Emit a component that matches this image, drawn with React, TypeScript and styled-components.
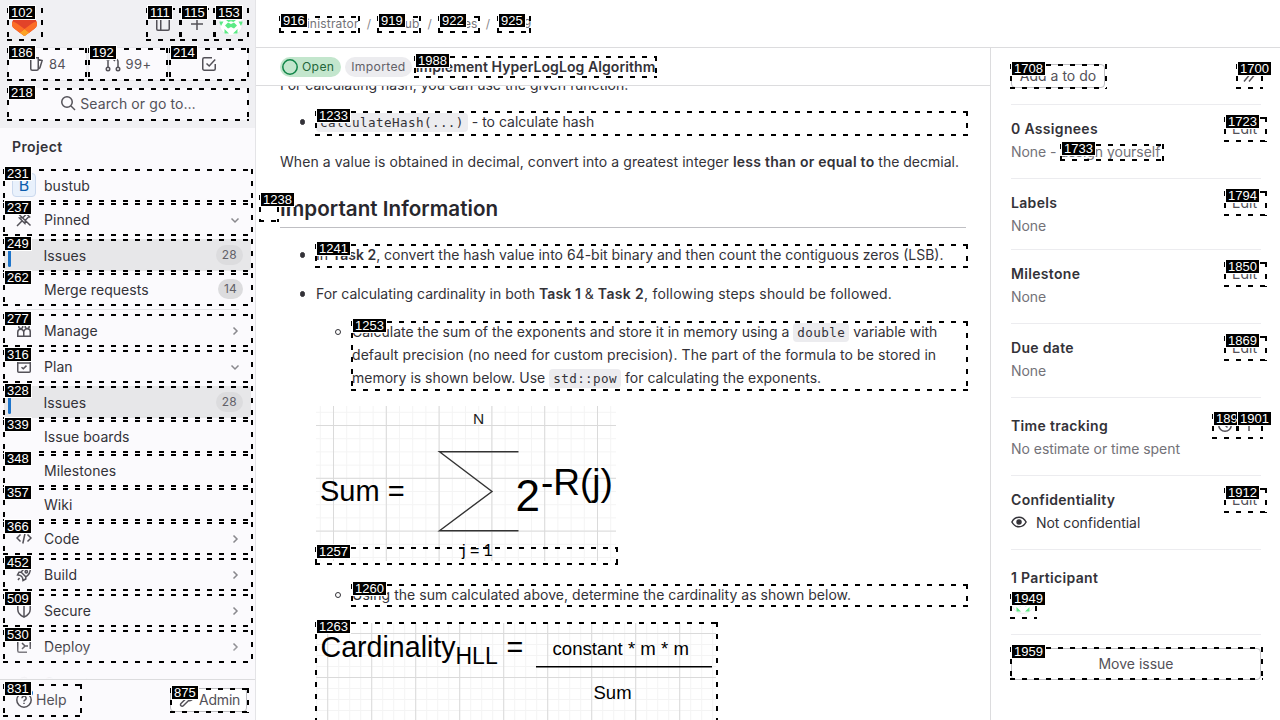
import React from "react";
import styled, { createGlobalStyle } from "styled-components";

const Global = createGlobalStyle`
  *, *::before { box-sizing: border-box; }
  html, body { margin: 0; height: 100%; overflow: hidden; }
  body {
    font-family: Inter, "Noto Sans", "Liberation Sans", sans-serif;
    font-size: 14px;
    color: #333238;
    background: #fff;
  }
  p, ul, h2, h3 { margin: 0; padding: 0; }
  a { color: inherit; text-decoration: none; }
`;

const Page = styled.div`
  position: relative;
  display: flex;
  width: 1280px;
  height: 720px;
  overflow: hidden;
`;

/* ---------- Left sidebar ---------- */

const Sidebar = styled.aside`
  display: flex;
  flex-direction: column;
  width: 256px;
  height: 720px;
  flex: none;
  background: #fbfafd;
  border-right: 1px solid #e4e4e7;
`;

const SidebarTop = styled.header`
  height: 128px;
  flex: none;
  padding: 8px 7px 8px 8px;
  display: flex;
  flex-direction: column;
  gap: 8px;
  background: #f0f0f3;
`;

const BrandRow = styled.div`
  display: flex;
  align-items: center;
  height: 32px;
`;

const Logo = styled.a`
  display: flex;
  padding: 4px;
  margin-right: auto;
`;

const IconButton = styled.button`
  display: flex;
  align-items: center;
  justify-content: center;
  width: 34px;
  height: 32px;
  padding: 0;
  border: 0;
  background: none;
  color: #535158;
`;

const CounterRow = styled.div`
  display: grid;
  grid-template-columns: 78px 78px 78px;
  gap: 3px;
  height: 32px;
`;

const Counter = styled.a`
  display: flex;
  align-items: center;
  justify-content: center;
  gap: 5px;
  border-radius: 4px;
  background: #fbfafd;
  box-shadow: 0 0 0 1px #e9e9ed;
  color: #535158;
  font-size: 13px;
  letter-spacing: 0.4px;
`;

const Search = styled.button`
  display: flex;
  align-items: center;
  justify-content: center;
  gap: 4px;
  height: 32px;
  padding: 0 6px 2px;
  border: 0;
  border-radius: 4px;
  background: #fbfafd;
  color: #535158;
  font: inherit;
  letter-spacing: 0.1px;
`;

const Nav = styled.nav`
  position: relative;
  flex: 1;
  overflow: hidden;
  padding: 9px 4px 0;
`;

const NavFade = styled.div`
  position: absolute;
  left: 0;
  right: 0;
  bottom: 0;
  height: 36px;
  background: linear-gradient(to top, #fbfafd, rgba(251, 250, 253, 0));
`;

const NavHeading = styled.h2`
  height: 33px;
  padding-left: 8px;
  line-height: 20px;
  font-size: 14px;
  font-weight: 600;
  letter-spacing: 0.4px;
`;

const NavRow = styled.a<{ $after?: number; $active?: boolean }>`
  display: flex;
  align-items: center;
  height: 32px;
  margin-bottom: ${(p) => p.$after ?? 2}px;
  padding: 0 8px ${(p) => (p.$active ? 0 : 2)}px;
  border-radius: 4px;
  background: ${(p) => (p.$active ? "#e7e7e9" : "transparent")};
`;

const ActiveBar = styled.span`
  width: 3px;
  height: 24px;
  margin: 0 1px 0 -4px;
  border-radius: 4px;
  background: #1f75cb;
`;

const NavIcon = styled.span<{ $narrow?: boolean }>`
  display: flex;
  justify-content: center;
  width: 24px;
  margin-right: ${(p) => (p.$narrow ? 7.5 : 8)}px;
  color: #535158;
`;

const NavLabel = styled.span`
  flex: 1;
  letter-spacing: 0.05px;
`;

const Count = styled.span`
  padding: 0 6px;
  border-radius: 10px;
  background: #dcdcde;
  color: #626168;
  font-size: 12px;
  line-height: 20px;
  letter-spacing: 0.2px;
`;

const ProjectAvatar = styled.span`
  width: 24px;
  height: 24px;
  margin-right: 8px;
  border: 1px solid #cbd9ee;
  border-radius: 4px;
  background: #e9f1fc;
  color: #0b5cad;
  font-size: 16px;
  line-height: 22px;
  text-align: center;
`;

const Chevron = styled.span`
  display: flex;
  padding-top: 1px;
  color: #89888d;
`;

const Divider = styled.hr`
  height: 1px;
  margin: 3px 12px 5px;
  border: 0;
  background: #e4e4e7;
`;

const SidebarFooter = styled.footer`
  display: flex;
  align-items: center;
  justify-content: space-between;
  height: 41px;
  padding: 0 8px 0 16px;
  border-top: 1px solid #dcdcde;
`;

const HelpButton = styled.a`
  position: relative;
  display: flex;
  align-items: center;
  gap: 4px;
  padding-bottom: 1px;
  color: #535158;
`;

const HelpDot = styled.i`
  position: absolute;
  left: 11px;
  top: -1px;
  width: 6px;
  height: 6px;
  border-radius: 50%;
  background: #1f75cb;
`;

const AdminButton = styled.a`
  display: flex;
  align-items: center;
  gap: 4px;
  width: 77px;
  height: 24px;
  padding: 0 5px 1px 8px;
  border: 1px solid #bfbfc3;
  border-radius: 4px;
  background: #fff;
  color: #535158;
  letter-spacing: -0.2px;
`;

/* ---------- Main column ---------- */

const Main = styled.div`
  display: flex;
  flex-direction: column;
  flex: 1;
  min-width: 0;
`;

const TopBar = styled.header`
  display: flex;
  align-items: center;
  gap: 8px;
  height: 48px;
  padding-left: 24px;
  border-bottom: 1px solid #dcdcde;
  color: #737278;
  font-size: 12px;
  letter-spacing: 0.2px;
`;

const Slash = styled.span`
  color: #89888d;
`;

const Body = styled.div`
  display: flex;
  flex: 1;
  min-height: 0;
`;

const Issue = styled.main`
  width: 734px;
  overflow: hidden;
  display: flex;
  flex-direction: column;
`;

const StickyHeader = styled.div`
  display: flex;
  align-items: center;
  gap: 4px;
  height: 38px;
  flex: none;
  padding-left: 24px;
  border-bottom: 1px solid #dcdcde;
`;

const Badge = styled.span<{ $open?: boolean }>`
  display: flex;
  align-items: center;
  gap: 4px;
  height: 20px;
  padding: ${(p) => (p.$open ? "0 7px 0 2px" : "0 6px")};
  border-radius: 10px;
  background: ${(p) => (p.$open ? "#c3e6cd" : "#ececef")};
  color: ${(p) => (p.$open ? "#24663b" : "#626168")};
  font-size: 12.2px;
  letter-spacing: 0.3px;
`;

const StatusIcon = styled.span`
  display: flex;
  color: #108548;
`;

const StickyTitle = styled.strong`
  font-weight: 600;
  letter-spacing: 0.08px;
`;

const Description = styled.article`
  flex: 1;
  min-height: 0;
  overflow: hidden;
  padding: 0 24px;
  line-height: 23px;
`;

const Paragraph = styled.p<{ $top: number }>`
  height: 23px;
  margin-top: ${(p) => p.$top}px;
  white-space: nowrap;
`;

const Bold = styled.strong<{ $track?: number }>`
  font-weight: 600;
  letter-spacing: ${(p) => p.$track ?? 0}px;
`;

const Tracked = styled.span<{ $track: number }>`
  letter-spacing: ${(p) => p.$track}px;
`;

const Heading = styled.h2`
  height: 35px;
  margin: 20px 0 15px;
  border-bottom: 1px solid #bfbfc3;
  font-size: 20.6px;
  font-weight: 600;
  line-height: 32px;
  letter-spacing: 0.04px;
  color: #28272d;
`;

const List = styled.ul<{ $top?: number }>`
  margin-top: ${(p) => p.$top ?? 0}px;
  padding-left: 36px;
  list-style: none;
`;

const Item = styled.li<{ $hollow?: boolean; $after?: number }>`
  position: relative;
  margin-bottom: ${(p) => p.$after ?? 0}px;
  &::before {
    content: "";
    position: absolute;
    left: ${(p) => (p.$hollow ? -17 : -16.4)}px;
    top: 9px;
    width: ${(p) => (p.$hollow ? 6 : 5.6)}px;
    height: ${(p) => (p.$hollow ? 6 : 5.6)}px;
    border-radius: 50%;
    border: 1px solid #333238;
    background: ${(p) => (p.$hollow ? "transparent" : "#333238")};
  }
`;

const Line = styled.span<{ $track?: number }>`
  display: block;
  height: 23px;
  white-space: nowrap;
  letter-spacing: ${(p) => p.$track ?? 0}px;
`;

const Code = styled.code`
  padding: 2px 4px;
  border-radius: 4px;
  background: #ececef;
  font-family: "DejaVu Sans Mono", "Liberation Mono", monospace;
  font-size: 12.6px;
  line-height: 1;
  letter-spacing: 0.41px;
`;

const Figure = styled.svg<{ $after?: number }>`
  display: block;
  margin-bottom: ${(p) => p.$after ?? 0}px;
  font-family: "Liberation Sans", Arial, sans-serif;
`;

/* ---------- Right panel ---------- */

const Panel = styled.aside`
  flex: 1;
  padding: 0 19px 0 20px;
  border-left: 1px solid #dcdcde;
`;

const Section = styled.section<{ $height: number; $pad?: number }>`
  height: ${(p) => p.$height}px;
  padding-top: ${(p) => p.$pad ?? 11}px;
  border-bottom: 1px solid #ececef;
`;

const SectionHead = styled.div`
  display: flex;
  align-items: center;
  justify-content: space-between;
  height: 24px;
`;

const SectionTitle = styled.h3`
  font-size: 14px;
  font-weight: 600;
  letter-spacing: 0.32px;
`;

const Value = styled.div<{ $strong?: boolean }>`
  display: flex;
  align-items: center;
  gap: 9px;
  height: 22px;
  color: ${(p) => (p.$strong ? "#333238" : "#737278")};
  letter-spacing: -0.04px;
`;

const Participants = styled.div`
  display: flex;
  padding-top: 1px;
`;

const Edit = styled.a`
  padding-right: 4px;
  color: #535158;
`;

const Tools = styled.span`
  display: flex;
  gap: 8px;
  padding-right: 4px;
  color: #535158;
`;

const Button = styled.button<{ $wide?: boolean }>`
  height: ${(p) => (p.$wide ? 32 : 24)}px;
  width: ${(p) => (p.$wide ? "100%" : "94px")};
  margin-top: ${(p) => (p.$wide ? 13 : 0)}px;
  padding: 0 0 2px 0;
  border: 1px solid #bfbfc3;
  border-radius: 4px;
  background: #fff;
  color: #535158;
  font: inherit;
`;

/* ---------- Element markers ---------- */

const dashX = "repeating-linear-gradient(90deg, #000 0 5px, transparent 5px 12px)";
const dashY = "repeating-linear-gradient(180deg, #000 0 5px, transparent 5px 12px)";

const MarkBox = styled.div<{ $x: number; $y: number; $w: number; $h: number }>`
  position: absolute;
  left: ${(p) => p.$x}px;
  top: ${(p) => p.$y}px;
  width: ${(p) => p.$w}px;
  height: ${(p) => p.$h}px;
  background:
    ${dashX} 0 0 / 100% 2px no-repeat,
    ${dashX} 0 100% / 100% 2px no-repeat,
    ${dashY} 0 0 / 2px 100% no-repeat,
    ${dashY} 100% 0 / 2px 100% no-repeat;
  pointer-events: none;
`;

const MarkTag = styled.span`
  position: absolute;
  left: 1px;
  top: -3px;
  height: 15px;
  padding: 0 2px;
  border: 1px solid #fff;
  background: #000;
  color: #fff;
  font: 13px/14px "Liberation Sans", Arial, sans-serif;
`;

const marks: [string, number, number, number, number][] = [
  ["102", 7, 8, 43, 41],
  ["111", 146, 8, 181, 41],
  ["115", 180, 8, 215, 41],
  ["153", 214, 8, 249, 41],
  ["186", 7, 48, 87, 81],
  ["192", 88, 48, 168, 81],
  ["214", 169, 48, 249, 81],
  ["218", 7, 88, 249, 121],
  ["231", 3, 169, 253, 202],
  ["237", 3, 203, 253, 236],
  ["249", 3, 239, 253, 272],
  ["262", 3, 273, 253, 306],
  ["277", 3, 314, 253, 347],
  ["316", 3, 350, 253, 383],
  ["328", 3, 386, 253, 419],
  ["339", 3, 420, 253, 453],
  ["348", 3, 454, 253, 487],
  ["357", 3, 488, 253, 521],
  ["366", 3, 522, 253, 555],
  ["452", 3, 558, 253, 591],
  ["509", 3, 594, 253, 627],
  ["530", 3, 630, 253, 663],
  ["831", 3, 684, 82, 717],
  ["875", 170, 688, 249, 713],
  ["916", 279, 16, 360, 33],
  ["919", 377, 16, 421, 33],
  ["922", 438, 16, 480, 33],
  ["925", 497, 16, 531, 33],
  ["1988", 414, 56, 657, 78],
  ["1233", 315, 111, 968, 136],
  ["1238", 259, 195, 279, 222],
  ["1241", 315, 244, 968, 268],
  ["1253", 351, 321, 968, 391],
  ["1257", 315, 547, 618, 565],
  ["1260", 351, 584, 968, 607],
  ["1263", 315, 622, 718, 760],
  ["1708", 1010, 64, 1107, 89],
  ["1700", 1236, 64, 1263, 89],
  ["1723", 1224, 117, 1267, 142],
  ["1733", 1060, 144, 1164, 161],
  ["1794", 1224, 191, 1267, 216],
  ["1850", 1224, 262, 1267, 287],
  ["1869", 1224, 336, 1267, 361],
  ["1897", 1212, 414, 1239, 439],
  ["1901", 1236, 414, 1263, 439],
  ["1912", 1224, 488, 1267, 513],
  ["1949", 1010, 594, 1037, 619],
  ["1959", 1010, 647, 1263, 680],
];

/* ---------- Icons ---------- */

const Svg = ({ children }: { children: React.ReactNode }) => (
  <svg width="16" height="16" viewBox="0 0 16 16" fill="none" stroke="currentColor" strokeWidth="1.5">
    {children}
  </svg>
);

const icons = {
  down: <Svg><path d="M4.5 6.5 8 10l3.5-3.5" /></Svg>,
  right: <Svg><path d="M6.5 4.5 10 8l-3.5 3.5" /></Svg>,
  panel: <Svg><rect x="1.75" y="1.75" width="12.5" height="12.5" rx="1.2" /><path d="M5.75 2v12" /></Svg>,
  plus: <Svg><path d="M8 2v12M2 8h12" /></Svg>,
  issues: <Svg><path d="M2.75 1.75h7.5v11a1.5 1.5 0 0 1-1.5 1.5h-4.5a1.5 1.5 0 0 1-1.5-1.5zM10.2 3.6l3.9 1-2.2 7.2-2 1.6" /></Svg>,
  merge: <Svg><circle cx="3" cy="13" r="1.75" /><circle cx="13" cy="13" r="1.75" /><path d="M3 11.2V2.2M1 4l2-2 2 2M13 11.2V5.5A2.5 2.5 0 0 0 10.5 3H8M10 1 8 3l2 2" /></Svg>,
  todo: <Svg><path d="M14.25 8v4.75a1.5 1.5 0 0 1-1.5 1.5h-9.5a1.5 1.5 0 0 1-1.5-1.5v-9.5a1.5 1.5 0 0 1 1.5-1.5H11M5.5 7.5 8.2 10l6-6.5" /></Svg>,
  search: <Svg><circle cx="7" cy="7" r="5.25" /><path d="m11 11 4 4" /></Svg>,
  pin: <Svg><path d="m9.5 1.8 4.7 4.7M10.5 3 7 6.5l-3.5.6 5.4 5.4.6-3.5L13 5.5M6.2 9.8 1 15M1.5 2l13 12.5" /></Svg>,
  people: <Svg><path d="M1.75 14.25h6v-4a3 3 0 0 0-6 0zM8 14.25h6.25v-4a3 3 0 0 0-6.2-.8" /><circle cx="4.75" cy="4.5" r="2" /><circle cx="11.2" cy="4.5" r="2" /></Svg>,
  plan: <Svg><rect x="1.75" y="1.75" width="12.5" height="12.5" rx="1" /><path d="M2 5h12M5.5 9.2l1.8 1.6 3.2-3.2" /></Svg>,
  code: <Svg><path d="M4.5 4.5 1 8l3.5 3.5M11.5 4.5 15 8l-3.5 3.5M9.2 2.5 6.8 13.5" /></Svg>,
  rocket: <Svg><path d="M5.2 6.2C7 3 10 1.5 14.3 1.7c.2 4.3-1.3 7.3-4.5 9.1zM5.2 6.2H3L1.5 9l3 .5M9.8 10.8V13L7 14.5 6.5 11.5M4.5 9.5l2 2M3.5 12 2 14" /><circle cx="10.3" cy="5.7" r="1.2" /></Svg>,
  shield: <Svg><path d="M8 1.2 14.2 3v4.5c0 3.4-2.7 6-6.2 7.7-3.5-1.7-6.2-4.3-6.2-7.7V3zM8 2v13" /></Svg>,
  deploy: <Svg><path d="M4.5 1.75H3.2a1.5 1.5 0 0 0-1.45 1.5v9.5a1.5 1.5 0 0 0 1.5 1.5H11M11.5 1.75h1.25a1.5 1.5 0 0 1 1.5 1.5V11M6 5l3 3-3 3M9.5 8H12" /></Svg>,
  operate: <Svg><path d="M4.5 13.5a3.5 3.5 0 0 1-.3-7 4 4 0 0 1 7.8 0 3.5 3.5 0 0 1-.5 7z" /></Svg>,
  help: <Svg><circle cx="8" cy="8" r="7.2" /><path d="M5.9 6.2A2.1 2.1 0 1 1 8.7 8.2c-.5.2-.7.5-.7 1.2M8 10.8v1.3" /></Svg>,
  wrench: <Svg><path d="M13.7 4.3 11.5 6.5 9.8 4.8 12 2.3C9.5 1 6.6 3.2 7.3 6.2L2 11.5a1.5 1.5 0 0 0 2.3 2.3l5.3-5.3c3 .7 5.2-1.7 4.1-4.2z" /></Svg>,
  open: <Svg><circle cx="8" cy="8" r="7.2" /></Svg>,
  collapse: <Svg><path d="M8.5 3 8 7.5l-5 6M13.500 3 13 7.500l-5 6" /></Svg>,
  clock: <Svg><circle cx="8" cy="8" r="6.3" /><path d="M8 4.5V8l2.5 2.5" /></Svg>,
  eye: <Svg><path d="M.9 8C2.5 5 5 3.2 8 3.2S13.5 5 15.1 8C13.5 11 11 12.8 8 12.8S2.5 11 .9 8z" /><circle cx="8" cy="8" r="2" fill="currentColor" /></Svg>,
};

const Tanuki = () => (
  <svg width="25" height="24" viewBox="0 0 25 24">
    <path d="m24.507 9.5-.034-.09L21.082.562a.896.896 0 0 0-1.694.091l-2.29 7.01H7.825L5.535.653a.898.898 0 0 0-1.694-.09L.451 9.411.416 9.5a6.297 6.297 0 0 0 2.09 7.278l5.202 3.899 2.56 1.935 1.554 1.176a1.051 1.051 0 0 0 1.268 0l1.555-1.176 2.56-1.935 5.197-3.89A6.297 6.297 0 0 0 24.507 9.5Z" fill="#E24329" />
    <path d="m24.507 9.5-.034-.09a11.44 11.44 0 0 0-4.56 2.051l-7.447 5.632 4.742 3.584 5.197-3.89A6.297 6.297 0 0 0 24.507 9.5Z" fill="#FC6D26" />
    <path d="m7.707 20.677 2.56 1.935 1.555 1.176a1.051 1.051 0 0 0 1.268 0l1.555-1.176 2.56-1.935-4.743-3.584Z" fill="#FCA326" />
    <path d="M5.01 11.461a11.43 11.43 0 0 0-4.56-2.05L.416 9.5a6.297 6.297 0 0 0 2.09 7.278l5.202 3.899 4.745-3.584Z" fill="#FC6D26" />
  </svg>
);

const Identicon = () => (
  <svg width="24" height="24" viewBox="0 0 24 24">
    <defs><clipPath id="avatar"><circle cx="12" cy="12" r="11.8" /></clipPath></defs>
    <circle cx="12" cy="12" r="11.5" fill="#fff" stroke="#e4e4e7" strokeWidth="0.7" />
    <g clipPath="url(#avatar)" fill="#5cea85">
      <path d="M5.5 3.5H10L5.5 8zM18.5 3.5H14L18.5 8zM0 9.5h4.5L2 14zM24 9.5h-4.5L22 14zM5.5 21.500V17L10 21.500zM18.500 21.500V17L14 21.500z" />
      <path d="M9 10.500 12 12l3-1.500 3 3-3 3-3-1.500-3 1.500-3-3z" />
      <path d="M9 5.500 12 8.500l3-3 2 2.500-2.500 2L12 9.200 9.500 10 7 8z" />
    </g>
  </svg>
);

type GridProps = { w: number; h: number; x0: number; y0: number; step: number };

const GridLines = ({ w, h, x0, y0, step }: GridProps) => {
  const lines = (start: number, gap: number, max: number) => {
    const out: number[] = [];
    for (let v = start; v < max; v += gap) if (v >= 0) out.push(v);
    return out;
  };
  const draw = (gap: number, color: string) => (
    <path
      d={
        lines(x0 - step, gap, w).map((x) => `M${x} 0V${h}`).join("") +
        lines(y0 - step, gap, h).map((y) => `M0 ${y}H${w}`).join("")
      }
      stroke={color}
    />
  );
  return (
    <g strokeWidth="1">
      {draw(step / 4, "#f4f4f4")}
      {draw(step, "#dadada")}
    </g>
  );
};

type Row = { label: string; icon?: React.ReactNode; end?: React.ReactNode; count?: string; active?: boolean; after?: number };

const NavItem = ({ label, icon, end, count, active, after }: Row) => (
  <NavRow $after={after} $active={active}>
    {active && <ActiveBar />}
    <NavIcon $narrow={active}>{icon}</NavIcon>
    <NavLabel>{label}</NavLabel>
    {count && <Count>{count}</Count>}
    {end && <Chevron>{end}</Chevron>}
  </NavRow>
);

const planRows: Row[] = [
  { label: "Manage", icon: icons.people, end: icons.right, after: 4 },
  { label: "Plan", icon: icons.plan, end: icons.down, after: 3 },
  { label: "Issues", count: "28", active: true, after: 3 },
  { label: "Issue boards" },
  { label: "Milestones" },
  { label: "Wiki" },
  { label: "Code", icon: icons.code, end: icons.right, after: 4 },
  { label: "Build", icon: icons.rocket, end: icons.right, after: 4 },
  { label: "Secure", icon: icons.shield, end: icons.right, after: 4 },
  { label: "Deploy", icon: icons.deploy, end: icons.right, after: 4 },
  { label: "Operate", icon: icons.operate, end: icons.right },
];

export default function App() {
  return (
    <Page>
      <Global />
      <Sidebar>
        <SidebarTop>
          <BrandRow>
            <Logo><Tanuki /></Logo>
            <IconButton>{icons.panel}</IconButton>
            <IconButton>{icons.plus}</IconButton>
            <IconButton><Identicon /></IconButton>
          </BrandRow>
          <CounterRow>
            <Counter>{icons.issues}84</Counter>
            <Counter>{icons.merge}99+</Counter>
            <Counter>{icons.todo}</Counter>
          </CounterRow>
          <Search>{icons.search}Search or go to…</Search>
        </SidebarTop>
        <Nav>
          <NavHeading>Project</NavHeading>
          <NavRow>
            <ProjectAvatar>B</ProjectAvatar>
            <NavLabel>bustub</NavLabel>
          </NavRow>
          <NavItem label="Pinned" icon={icons.pin} end={icons.down} after={3} />
          <NavItem label="Issues" count="28" active after={3} />
          <NavItem label="Merge requests" count="14" after={0} />
          <Divider />
          {planRows.map((row) => <NavItem key={row.label} {...row} />)}
          <NavFade />
        </Nav>
        <SidebarFooter>
          <HelpButton>{icons.help}<HelpDot />Help</HelpButton>
          <AdminButton>{icons.wrench}Admin</AdminButton>
        </SidebarFooter>
      </Sidebar>

      <Main>
        <TopBar>
          <a>Administrator</a><Slash>/</Slash>
          <a>bustub</a><Slash>/</Slash>
          <a>Issues</a><Slash>/</Slash>
          <a>#1169</a>
        </TopBar>
        <Body>
          <Issue>
            <StickyHeader>
              <Badge $open><StatusIcon>{icons.open}</StatusIcon>Open</Badge>
              <Badge>Imported</Badge>
              <StickyTitle>Implement HyperLogLog Algorithm</StickyTitle>
            </StickyHeader>
            <Description>
              <Paragraph $top={-13}>For calculating hash, you can use the given function:</Paragraph>
              <List $top={14}>
                <Item><Line><Code>calculateHash(...)</Code> - to calculate hash</Line></Item>
              </List>
              <Paragraph $top={17}>
                <Tracked $track={0.065}>When a value is obtained in decimal, convert into a greatest integer </Tracked>
                <Bold $track={0.25}>less than or equal to</Bold> the decmial.
              </Paragraph>
              <Heading>Important Information</Heading>
              <List>
                <Item $after={16}>
                  <Line>In <Bold>Task 2</Bold>, convert the hash value into 64-bit binary and then count the contiguous zeros (LSB).</Line>
                </Item>
                <Item>
                  <Line>
                    For calculating cardinality in both <Bold $track={0.1}>Task 1</Bold> &amp; <Bold $track={0.35}>Task 2</Bold>
                    <Tracked $track={0.2}>, following steps should be followed.</Tracked>
                  </Line>
                  <List $top={15}>
                    <Item $hollow $after={17}>
                      <Line>Calculate the sum of the exponents and store it in memory using a <Code>double</Code> variable with</Line>
                      <Line $track={0.07}>default precision (no need for custom precision). The part of the formula to be stored in</Line>
                      <Line>memory is shown below. Use <Code>std::pow</Code> for calculating the exponents.</Line>
                    </Item>
                  </List>
                  <Figure width="300" height="155" $after={22}>
                    <GridLines w={300} h={155} x0={17.5} y0={19.5} step={52.8} />
                    <path d="M202.5 45.7H123.5L176 85.5 123.5 124.7H202.5" fill="none" stroke="#333" strokeWidth="1.4" />
                    <text x="157" y="18" fontSize="15.5" fill="#222">N</text>
                    <text x="4" y="95" fontSize="29">Sum =</text>
                    <text x="199.5" y="104.5" fontSize="44">2</text>
                    <text x="225" y="88.5" fontSize="37">-R(j)</text>
                    <text x="146" y="150" fontSize="16">j = 1</text>
                  </Figure>
                  <List>
                    <Item $hollow $after={17}>
                      <Line $track={0.03}>Using the sum calculated above, determine the cardinality as shown below.</Line>
                    </Item>
                  </List>
                  <Figure width="400" height="180">
                    <GridLines w={400} h={180} x0={11.7} y0={10.5} step={44} />
                    <text x="4.5" y="34" fontSize="28.6">Cardinality</text>
                    <text x="139.5" y="41" fontSize="23">HLL</text>
                    <text x="190.5" y="34" fontSize="28.7">=</text>
                    <text x="236.5" y="32" fontSize="18.6">constant * m * m</text>
                    <path d="M220 43.7h176" stroke="#000" strokeWidth="1.4" />
                    <text x="277.5" y="76" fontSize="18.5">Sum</text>
                  </Figure>
                </Item>
              </List>
            </Description>
          </Issue>

          <Panel>
            <Section $height={57} $pad={16}>
              <SectionHead>
                <Button>Add a to do</Button>
                <Tools>{icons.collapse}</Tools>
              </SectionHead>
            </Section>
            <Section $height={74}>
              <SectionHead><SectionTitle>0 Assignees</SectionTitle><Edit>Edit</Edit></SectionHead>
              <Value><span>None - <a>assign yourself</a></span></Value>
            </Section>
            <Section $height={71}>
              <SectionHead><SectionTitle>Labels</SectionTitle><Edit>Edit</Edit></SectionHead>
              <Value>None</Value>
            </Section>
            <Section $height={74}>
              <SectionHead><SectionTitle>Milestone</SectionTitle><Edit>Edit</Edit></SectionHead>
              <Value>None</Value>
            </Section>
            <Section $height={74}>
              <SectionHead><SectionTitle>Due date</SectionTitle><Edit>Edit</Edit></SectionHead>
              <Value>None</Value>
            </Section>
            <Section $height={78} $pad={15}>
              <SectionHead><SectionTitle>Time tracking</SectionTitle><Tools>{icons.clock}{icons.plus}</Tools></SectionHead>
              <Value>No estimate or time spent</Value>
            </Section>
            <Section $height={74}>
              <SectionHead><SectionTitle>Confidentiality</SectionTitle><Edit>Edit</Edit></SectionHead>
              <Value $strong>{icons.eye}Not confidential</Value>
            </Section>
            <Section $height={85} $pad={15}>
              <SectionHead><SectionTitle>1 Participant</SectionTitle></SectionHead>
              <Participants><Identicon /></Participants>
            </Section>
            <Button $wide>Move issue</Button>
          </Panel>
        </Body>
      </Main>

      {marks.map(([label, x1, y1, x2, y2]) => (
        <MarkBox key={label} $x={x1} $y={y1} $w={x2 - x1} $h={y2 - y1}>
          <MarkTag>{label}</MarkTag>
        </MarkBox>
      ))}
    </Page>
  );
}
